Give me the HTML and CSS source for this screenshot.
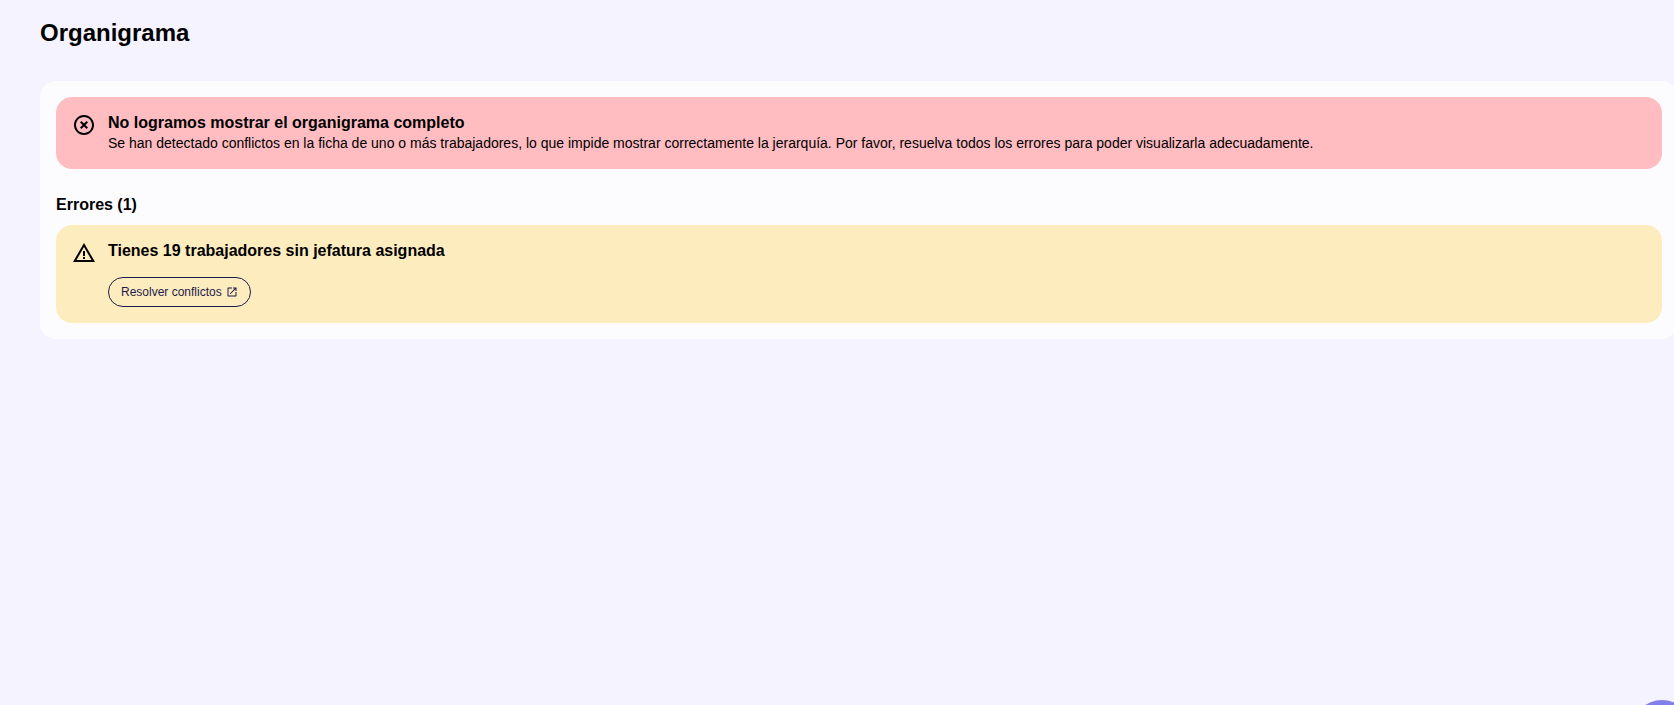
FILE: index.html
```html
<!DOCTYPE html>
<html lang="es">
<head>
  <meta charset="UTF-8">
  <meta name="viewport" content="width=device-width, initial-scale=1.0">
  <title>Organigrama</title>
  <link rel="stylesheet" href="styles.css">
</head>
<body>

  <main class="page">
    <h1 class="page-title">Organigrama</h1>

    <section class="card">
      <div class="alert alert-error">
        <svg class="alert-icon" viewBox="0 0 24 24" aria-hidden="true">
          <path d="M14.59 8 12 10.59 9.41 8 8 9.41 10.59 12 8 14.59 9.41 16 12 13.41 14.59 16 16 14.59 13.41 12 16 9.41 14.59 8zM12 2C6.47 2 2 6.47 2 12s4.47 10 10 10 10-4.47 10-10S17.53 2 12 2zm0 18c-4.41 0-8-3.59-8-8s3.59-8 8-8 8 3.59 8 8-3.59 8-8 8z"/>
        </svg>
        <div class="alert-body">
          <h2 class="alert-title">No logramos mostrar el organigrama completo</h2>
          <p class="alert-text">Se han detectado conflictos en la ficha de uno o más trabajadores, lo que impide mostrar correctamente la jerarquía. Por favor, resuelva todos los errores para poder visualizarla adecuadamente.</p>
        </div>
      </div>

      <h2 class="section-title">Errores (1)</h2>

      <div class="alert alert-warning">
        <svg class="alert-icon" viewBox="0 0 24 24" aria-hidden="true">
          <path d="M12 5.99 19.53 19H4.47L12 5.99M12 2 1 21h22L12 2zm1 14h-2v2h2v-2zm0-6h-2v5h2v-5z"/>
        </svg>
        <div class="alert-body">
          <h3 class="alert-title">Tienes 19 trabajadores sin jefatura asignada</h3>
          <button type="button" class="resolve-btn">
            Resolver conflictos
            <svg class="btn-icon" viewBox="0 0 24 24" aria-hidden="true">
              <path d="M19 19H5V5h7V3H5c-1.11 0-2 .9-2 2v14c0 1.1.89 2 2 2h14c1.1 0 2-.9 2-2v-7h-2v7zM14 3v2h3.59l-9.83 9.83 1.41 1.41L19 6.41V10h2V3h-7z"/>
            </svg>
          </button>
        </div>
      </div>
    </section>
  </main>

  <!-- Floating help button -->
  <button type="button" class="help-btn" aria-label="Ayuda"></button>

</body>
</html>
```
FILE: styles.css
```css
* {
  box-sizing: border-box;
}

body {
  margin: 0;
  min-height: 100vh;
  overflow: hidden;
  background: #f5f3ff;
  color: #000;
  font-family: Arial, "Liberation Sans", sans-serif;
}

.page {
  margin-right: -4px;
  padding: 16px 0 16px 40px;
}

.page-title {
  margin: 0 0 32px;
  font-size: 24px;
  line-height: 33px;
}

.card {
  padding: 16px;
  border-radius: 16px;
  background: #fcfcff;
}

.alert {
  display: flex;
  gap: 12px;
  padding: 16px;
  border-radius: 16px;
}

.alert-error {
  background: #ffbdc2;
}

.alert-warning {
  background: #fdecbe;
}

.alert-icon {
  flex: none;
  width: 24px;
  height: 24px;
}

.alert-title,
.section-title {
  margin: 0;
  font-size: 16px;
  line-height: 20px;
}

.alert-text {
  margin: 0;
  font-size: 14px;
  line-height: 20px;
}

.section-title {
  margin: 26px 0 10px;
}

.resolve-btn {
  display: flex;
  align-items: center;
  gap: 4px;
  height: 30px;
  margin-top: 16px;
  padding: 0 12px;
  border: 1px solid #1e1b4b;
  border-radius: 15px;
  background: transparent;
  color: #1e1b4b;
  font-family: inherit;
  font-size: 12px;
  cursor: pointer;
}

.btn-icon {
  width: 12px;
  height: 12px;
  fill: currentColor;
}

.help-btn {
  position: fixed;
  right: -18px;
  bottom: -55px;
  width: 60px;
  height: 60px;
  border: none;
  border-radius: 50%;
  background: #8280e8;
  cursor: pointer;
}
```
